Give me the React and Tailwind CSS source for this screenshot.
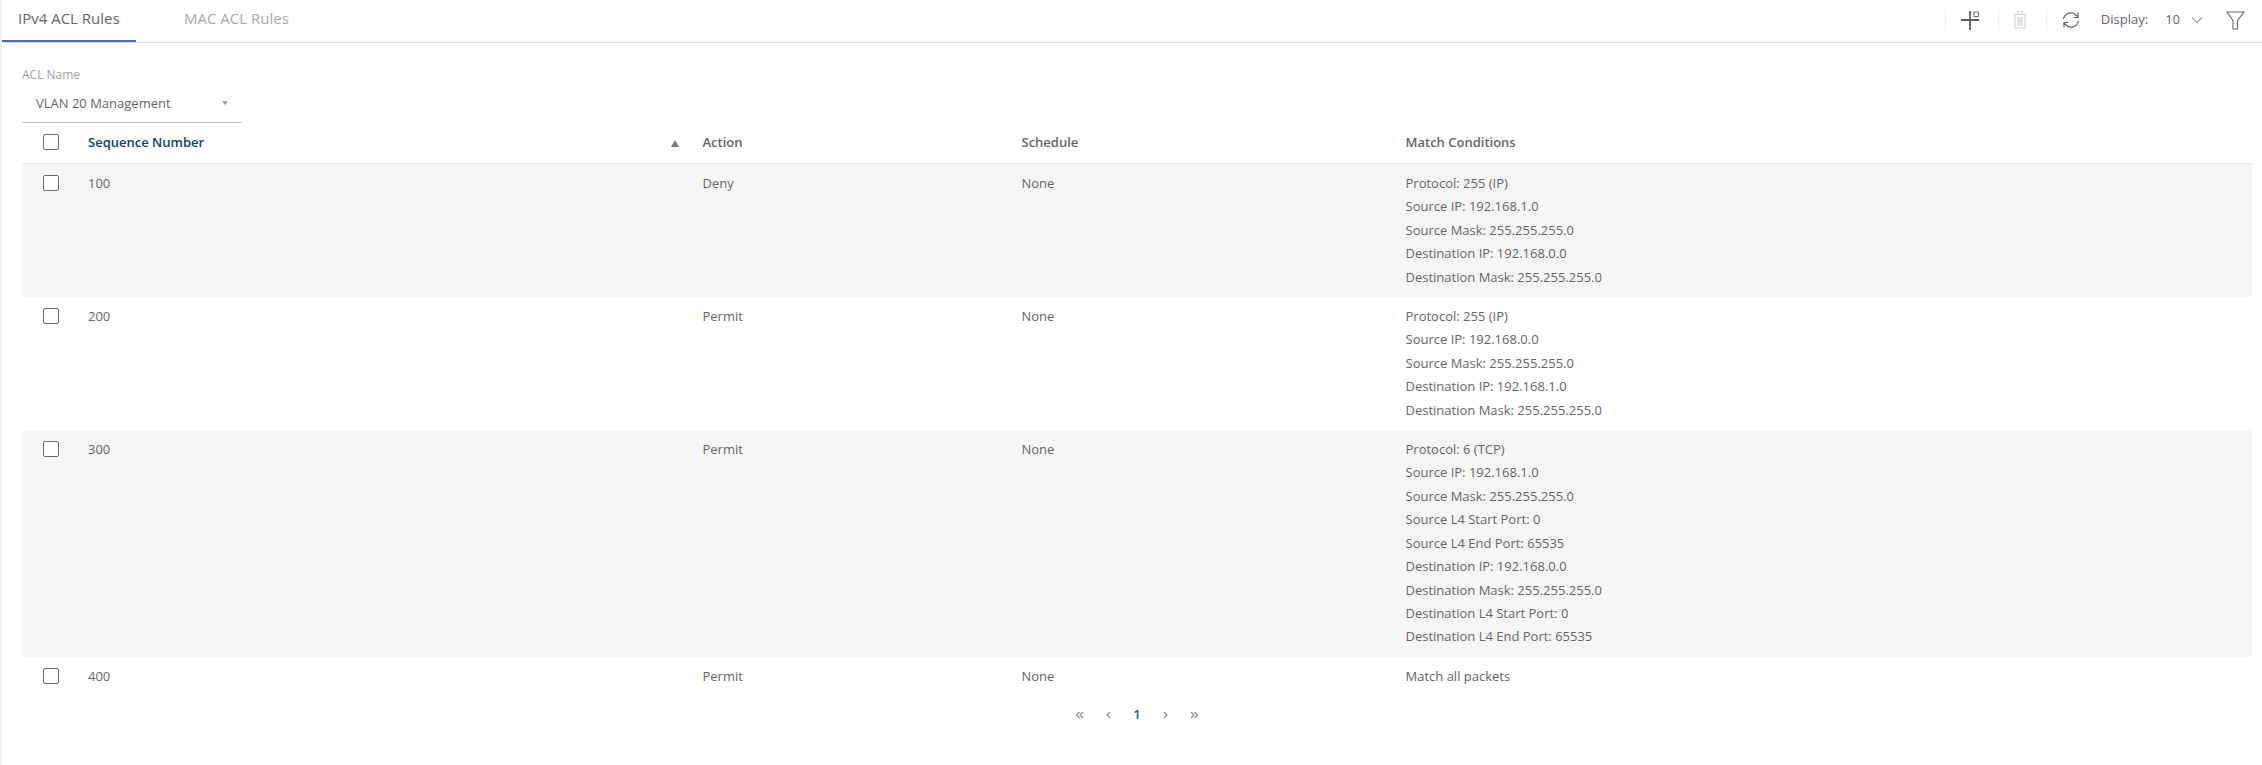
import React from 'react';

const rows = [
  {
    seq: '100',
    action: 'Deny',
    schedule: 'None',
    match: ['Protocol: 255 (IP)', 'Source IP: 192.168.1.0', 'Source Mask: 255.255.255.0', 'Destination IP: 192.168.0.0', 'Destination Mask: 255.255.255.0'],
  },
  {
    seq: '200',
    action: 'Permit',
    schedule: 'None',
    match: ['Protocol: 255 (IP)', 'Source IP: 192.168.0.0', 'Source Mask: 255.255.255.0', 'Destination IP: 192.168.1.0', 'Destination Mask: 255.255.255.0'],
  },
  {
    seq: '300',
    action: 'Permit',
    schedule: 'None',
    match: [
      'Protocol: 6 (TCP)',
      'Source IP: 192.168.1.0',
      'Source Mask: 255.255.255.0',
      'Source L4 Start Port: 0',
      'Source L4 End Port: 65535',
      'Destination IP: 192.168.0.0',
      'Destination Mask: 255.255.255.0',
      'Destination L4 Start Port: 0',
      'Destination L4 End Port: 65535',
    ],
  },
  { seq: '400', action: 'Permit', schedule: 'None', match: ['Match all packets'] },
];

function Checkbox() {
  return <span className="block w-4 h-4 rounded-[2px] border border-[#6b6b6b] bg-white" />;
}

function Divider() {
  return <span className="block w-px h-[20px] bg-[#eeeeee]" />;
}

function PagerIcon({ d }) {
  return (
    <svg width="10" height="10" viewBox="0 0 10 10" fill="none" stroke="#7f8790" strokeWidth="1.1">
      <path d={d} />
    </svg>
  );
}

export default function App() {
  return (
    <div className="w-[2262px] h-[765px] bg-white border-l-2 border-[#efefef] font-['Open_Sans',sans-serif] text-[13px] text-[#666666] overflow-hidden">
      <div className="flex items-center justify-between h-[43px] border-b border-[#dddddd]">
        <div className="flex h-full">
          <div className="w-[134px] h-full pl-4 pt-[7px] text-[15px] text-[#666666] border-b-2 border-[#4a6fc0]">IPv4 ACL Rules</div>
          <div className="pl-[48px] pt-[7px] text-[15px] text-[#a9a9a9]">MAC ACL Rules</div>
        </div>
        <div className="flex items-center h-full pb-[2px] pr-[17px]">
          <Divider />
          <svg className="ml-[14px]" width="20" height="20" viewBox="0 0 20 20" fill="none" stroke="#5f5f5f">
            <path d="M10 1v19M1 10h18" strokeWidth="1.800" />
            <rect x="14" y="2" width="4.500" height="4.500" strokeWidth="0.900" />
          </svg>
          <span className="ml-[18px]"><Divider /></span>
          <svg className="ml-[14px]" width="14" height="18" viewBox="0 0 14 18" fill="none" stroke="#d4d4d4" strokeWidth="1.200">
            <path d="M0.500 3.500h13M4.500 3.500v-2.500h5v2.500M2 3.500v13.500h10v-13.500M5 6v9M7 6v9M9 6v9" />
          </svg>
          <span className="ml-[19px]"><Divider /></span>
          <svg className="ml-[15px]" width="18" height="18" viewBox="0 0 18 18" fill="none" stroke="#666666" strokeWidth="1.200">
            <path d="M1.500 8a7.500 7.500 0 0 1 13-3.500l1.500 2M16 1.500v5h-4.500M16.500 10a7.500 7.500 0 0 1-13 3.500l-1.500-2M2 16.500v-5h4.500" />
          </svg>
          <span className="ml-[21px]">Display:</span>
          <span className="ml-[17px]">10</span>
          <svg className="ml-[11px]" width="12" height="8" viewBox="0 0 12 8" fill="none" stroke="#999999" strokeWidth="1.100">
            <path d="M1 1.500l5 5 5-5" />
          </svg>
          <svg className="ml-[23px]" width="19" height="19" viewBox="0 0 19 19" fill="none" stroke="#666666" strokeWidth="1.100">
            <path d="M1 1h17l-6.500 8.500v8.500h-4.500v-8.500z" />
          </svg>
        </div>
      </div>

      <div className="pl-5 pr-[10px]">
        <div className="w-[220px] pt-[23px]">
          <div className="text-[12px] leading-[18px] text-[#a3a3a3]">ACL Name</div>
          <div className="flex items-center justify-between h-[39px] pl-[14px] pr-[14px] border-b border-[#c4c4c4]">
            <span className="pt-[1px]">VLAN 20 Management</span>
            <span className="w-0 h-0 border-x-[3.500px] border-t-[4px] border-x-transparent border-t-[#a5a5a5]" />
          </div>
        </div>

        <div className="grid grid-cols-[66px_614.500px_319px_384px_1fr] items-center h-[40px] font-semibold">
          <div className="pl-[21px] pb-[2px]"><Checkbox /></div>
          <div className="relative text-[#08475f]">
            Sequence Number
            <span className="absolute right-[24px] top-[7px] w-0 h-0 border-x-[4px] border-b-[7px] border-x-transparent border-b-[#7a7a7a]" />
          </div>
          <div>Action</div>
          <div>Schedule</div>
          <div>Match Conditions</div>
        </div>

        {rows.map((row, i) => (
          <div
            key={row.seq}
            className={`grid grid-cols-[66px_614.500px_319px_384px_1fr] py-[8px] leading-[23.400px] ${i % 2 === 0 && i < 3 ? 'bg-[#f6f6f6]' : ''} ${i === 0 ? 'border-t border-[#e8e8e8]' : ''}`}
          >
            <div className="pl-[21px] pt-[3px]"><Checkbox /></div>
            <div>{row.seq}</div>
            <div>{row.action}</div>
            <div>{row.schedule}</div>
            <div>
              {row.match.map((line) => (
                <div key={line}>{line}</div>
              ))}
            </div>
          </div>
        ))}

        <div className="flex justify-center items-center gap-[19px] mt-[9px]">
          <PagerIcon d="M4.500 2l-3 3 3 3M8 2l-3 3 3 3" />
          <PagerIcon d="M6 2l-3 3 3 3" />
          <span className="font-semibold text-[#1f5f86]">1</span>
          <PagerIcon d="M4 2l3 3-3 3" />
          <PagerIcon d="M2 2l3 3-3 3M5.500 2l3 3-3 3" />
        </div>
      </div>
    </div>
  );
}
